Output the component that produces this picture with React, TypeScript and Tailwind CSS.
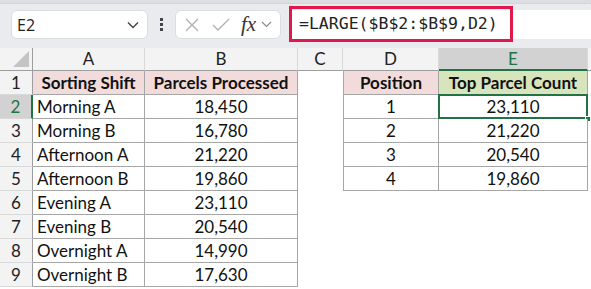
import React from "react";

const font = { fontFamily: "Lato, 'Open Sans', sans-serif" };

const shifts: [string, string][] = [
  ["Morning A", "18,450"],
  ["Morning B", "16,780"],
  ["Afternoon A", "21,220"],
  ["Afternoon B", "19,860"],
  ["Evening A", "23,110"],
  ["Evening B", "20,540"],
  ["Overnight A", "14,990"],
  ["Overnight B", "17,630"],
];
const tops = ["23,110", "21,220", "20,540", "19,860"];

export default function App() {
  const rows = [];
  for (let r = 1; r <= 9; r++) {
    const sel = r === 2;
    rows.push(
      <div
        key={"rh" + r}
        className={
          "flex items-center justify-center border-b border-[#d9d9d9] " +
          (sel
            ? "bg-[#d2d2d2] text-[#217346] border-r-2 border-r-[#217346]"
            : "bg-[#f3f3f3] text-[#222] border-r border-r-[#9e9e9e]")
        }
      >
        {r}
      </div>
    );
    if (r === 1) {
      rows.push(
        <div key="a1" className="flex items-center justify-center bg-[#f2dcdb] font-bold border-r border-b border-[#a6a6a6]">
          Sorting Shift
        </div>
      );
      rows.push(
        <div key="b1" className="flex items-center justify-center bg-[#f2dcdb] font-bold border-r border-b border-[#a6a6a6]">
          Parcels Processed
        </div>
      );
    } else {
      const [n, v] = shifts[r - 2];
      rows.push(
        <div key={"a" + r} className="flex items-center pl-[4px] bg-white border-r border-b border-[#a6a6a6]">
          {n}
        </div>
      );
      rows.push(
        <div key={"b" + r} className="flex items-center justify-center bg-white border-r border-b border-[#a6a6a6]">
          {v}
        </div>
      );
    }
    rows.push(<div key={"c" + r} className="bg-white" />);
    if (r === 1) {
      rows.push(
        <div key="d1" className="flex items-center justify-center bg-[#f2dcdb] font-bold border-l border-r border-b border-[#a6a6a6]">
          Position
        </div>
      );
      rows.push(
        <div key="e1" className="flex items-center justify-center bg-[#d8e4bc] font-bold border-r border-b border-[#a6a6a6]">
          Top Parcel Count
        </div>
      );
    } else if (r <= 5) {
      rows.push(
        <div key={"d" + r} className="flex items-center justify-center bg-white border-l border-r border-b border-[#a6a6a6]">
          {r - 1}
        </div>
      );
      rows.push(
        <div key={"e" + r} className="relative flex items-center justify-center bg-white border-r border-b border-[#a6a6a6]">
          {tops[r - 2]}
          {r === 2 && (
            <>
              <div className="absolute left-[-1px] top-[-1px] right-[-1px] bottom-[-1px] border-2 border-[#217346]" />
              <div className="absolute right-[-4px] bottom-[-4px] w-[6px] h-[6px] bg-[#217346] border border-white" />
            </>
          )}
        </div>
      );
    } else {
      rows.push(<div key={"d" + r} className="bg-white" />);
      rows.push(<div key={"e" + r} className="bg-white" />);
    }
    rows.push(<div key={"f" + r} className="bg-white" />);
  }

  return (
    <div className="w-[591px] h-[289px] overflow-hidden bg-white text-[17px] text-[#111]" style={font}>
      <div className="h-[4px] bg-[#dcdee2] border-b border-dotted border-[#c9ccd1]" />
      <div className="h-[44px] bg-[#e9ebee] flex items-start pt-[6px]">
        <div className="ml-[11px] w-[137px] h-[29px] bg-white rounded-[6px] border border-[#dadce0] flex items-center justify-between pl-[5px] pr-[8px]">
          <span className="text-[16px] text-[#222]" style={{ fontFamily: "'Open Sans', sans-serif" }}>E2</span>
          <svg width="12" height="8" viewBox="0 0 12 8">
            <path d="M1 1.5 L6 6.5 L11 1.5" stroke="#444" strokeWidth="1.4" fill="none" />
          </svg>
        </div>
        <div className="w-[27px] h-[29px] flex flex-col items-center justify-center gap-[2px]">
          <div className="w-[3px] h-[3px] bg-[#444]" />
          <div className="w-[3px] h-[3px] bg-[#444]" />
          <div className="w-[3px] h-[3px] bg-[#444]" />
        </div>
        <div className="w-[106px] h-[29px] bg-white rounded-[6px] border border-[#dadce0] flex items-center pl-[8px]">
          <svg width="16" height="16" viewBox="0 0 16 16">
            <path d="M2 2 L14 14 M14 2 L2 14" stroke="#b0b0b0" strokeWidth="1.3" fill="none" />
          </svg>
          <svg width="18" height="14" viewBox="0 0 18 14" className="ml-[12px]">
            <path d="M1 7 L6 12 L17 1" stroke="#b0b0b0" strokeWidth="1.3" fill="none" />
          </svg>
          <span
            className="ml-[11px] italic text-[21px] text-[#333] leading-none"
            style={{ fontFamily: "'Liberation Serif', serif" }}
          >
            fx
          </span>
          <svg width="11" height="7" viewBox="0 0 11 7" className="ml-[5px]">
            <path d="M1 1 L5.5 5.5 L10 1" stroke="#888" strokeWidth="1.2" fill="none" />
          </svg>
        </div>
        <div className="ml-[8px] flex-1 h-[29px] bg-white flex items-center">
          <div className="relative h-[29px] w-[224px] flex items-center">
            <div className="absolute left-0 top-[-4px] w-[224px] h-[36px] border-[3px] border-[#e0194a]" />
            <span
              className="pl-[10px] text-[16.5px] text-[#222]"
              style={{ fontFamily: "'DejaVu Sans Mono', monospace" }}
            >
              =LARGE($B$2:$B$9,D2)
            </span>
          </div>
        </div>
      </div>
      <div className="grid grid-cols-[33px_112px_153px_45px_96px_149px_1fr] grid-rows-[23px_repeat(9,24px)]">
        <div className="relative bg-[#f3f3f3] border-r border-b border-[#9e9e9e]">
          <div
            className="absolute right-[3px] bottom-[3px] w-0 h-0"
            style={{ borderLeft: "16px solid transparent", borderBottom: "16px solid #c4c4c4" }}
          />
        </div>
        {["A", "B", "C", "D"].map((c) => (
          <div key={c} className="flex items-center justify-center bg-[#f3f3f3] text-[#222] border-r border-[#d9d9d9] border-b border-b-[#9e9e9e]">
            {c}
          </div>
        ))}
        <div className="flex items-center justify-center bg-[#d2d2d2] text-[#217346] border-r border-[#d9d9d9] border-b-2 border-b-[#217346]">
          E
        </div>
        <div className="bg-[#f3f3f3] border-b border-[#9e9e9e]" />
        {rows}
      </div>
    </div>
  );
}
